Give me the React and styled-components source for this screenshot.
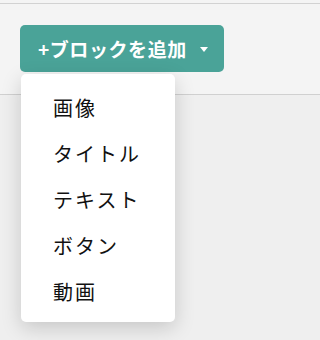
import styled, { createGlobalStyle } from "styled-components";

const blockTypes = ["画像", "タイトル", "テキスト", "ボタン", "動画"];

const GlobalStyle = createGlobalStyle`
  html, body {
    margin: 0;
    padding: 0;
    background: #efefef;
    font-family: "Noto Sans CJK JP", "Noto Sans", sans-serif;
  }
  * {
    box-sizing: border-box;
  }
`;

const App = () => {
  return (
    <Page>
      <GlobalStyle />
      <Toolbar>
        <Dropdown>
          <AddButton type="button">
            <Label>+ブロックを追加</Label>
            <Caret />
          </AddButton>
          <Menu>
            {blockTypes.map((label) => (
              <MenuItem key={label}>{label}</MenuItem>
            ))}
          </Menu>
        </Dropdown>
      </Toolbar>
    </Page>
  );
};

export default App;

const Page = styled.div`
  min-height: 340px;
  background: #efefef;
  border-top: 3px solid #f4f4f4;
`;

const Toolbar = styled.header`
  height: 92px;
  background: #f4f4f4;
  border-top: 1px solid #d2d2d2;
  border-bottom: 1px solid #d0d0d0;
  padding: 21px 0 0 20px;
`;

const Dropdown = styled.div`
  position: relative;
  display: inline-block;
`;

const AddButton = styled.button`
  display: flex;
  align-items: center;
  justify-content: space-between;
  width: 204px;
  height: 47px;
  padding: 0 16px 0 18px;
  border: none;
  border-radius: 5px;
  background: #4aa398;
  color: #fff;
  font-family: inherit;
  font-size: 19px;
  font-weight: 700;
  line-height: 1;
  cursor: pointer;
`;

const Label = styled.span`
  white-space: nowrap;
  letter-spacing: 0.03em;
`;

const Caret = styled.i`
  display: block;
  flex: none;
  width: 0;
  height: 0;
  margin-top: 1px;
  border-left: 4px solid transparent;
  border-right: 4px solid transparent;
  border-top: 5px solid #fff;
`;

const Menu = styled.ul`
  position: absolute;
  top: 49px;
  left: 1px;
  width: 154px;
  margin: 0;
  padding: 10px 0 8px;
  list-style: none;
  background: #fff;
  border-radius: 5px;
  box-shadow: 0 6px 20px rgba(0, 0, 0, 0.17);
  z-index: 2;
`;

const MenuItem = styled.li`
  height: 46px;
  display: flex;
  align-items: center;
  padding-left: 32px;
  font-size: 20px;
  letter-spacing: 0.1em;
  color: #111;
  cursor: pointer;
`;
